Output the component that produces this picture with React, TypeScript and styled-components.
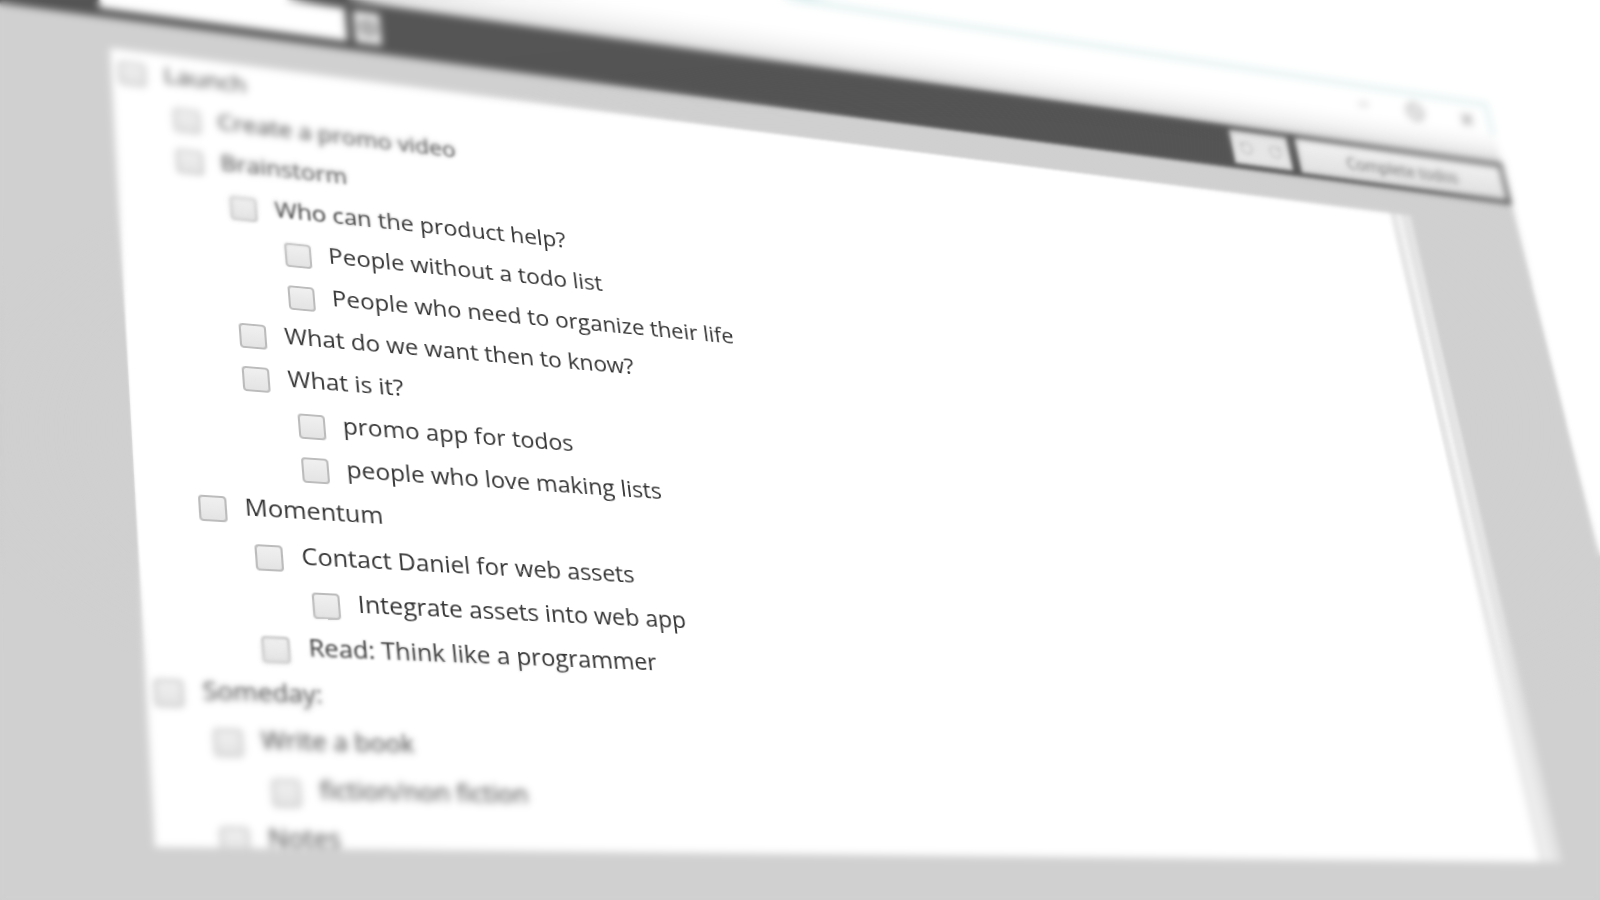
import React from 'react';
import styled, { createGlobalStyle } from 'styled-components';
import { CircleMinus, CirclePlus, Minus, RotateCcw, RotateCw, X } from 'lucide-react';

// the window is laid out flat, then projected so the document sheet lands on this quad
const SHEET_W = 1500;
const SHEET_H = 800;
const LEFT_BLEED = 400;
const TOP_BLEED = 182;

const projection = () => {
    const [x0, y0, x1, y1, x2, y2, x3, y3] = [110, 48, 1390, 213, 1540, 862, 155, 847];
    const dx1 = x1 - x2;
    const dx2 = x3 - x2;
    const sx = x0 - x1 + x2 - x3;
    const dy1 = y1 - y2;
    const dy2 = y3 - y2;
    const sy = y0 - y1 + y2 - y3;
    const den = dx1 * dy2 - dx2 * dy1;
    const g = (sx * dy2 - dx2 * sy) / den;
    const h = (dx1 * sy - sx * dy1) / den;
    const a = x1 - x0 + g * x1;
    const b = x3 - x0 + h * x3;
    const d = y1 - y0 + g * y1;
    const e = y3 - y0 + h * y3;
    const ox = LEFT_BLEED / SHEET_W;
    const oy = TOP_BLEED / SHEET_H;
    const w = 1 - g * ox - h * oy;
    const m = [
        a / SHEET_W, d / SHEET_W, 0, g / SHEET_W,
        b / SHEET_H, e / SHEET_H, 0, h / SHEET_H,
        0, 0, w, 0,
        x0 - a * ox - b * oy, y0 - d * ox - e * oy, 0, w,
    ];
    return `matrix3d(${m.map((n) => (n / w).toFixed(8)).join(',')})`;
};

const GlobalStyle = createGlobalStyle`
    html, body {
        margin: 0;
        background: #ffffff;
    }
`;

const Stage = styled.div`
    position: relative;
    width: 1600px;
    height: 900px;
    overflow: hidden;
    background: #ffffff;
    font-family: 'Open Sans', 'Liberation Sans', sans-serif;
`;

const AppWindow = styled.div`
    display: flex;
    flex-direction: column;
    width: 2090px;
    height: 1200px;
    transform-origin: 0 0;
    transform: ${projection()};
`;

const TitleBar = styled.div`
    position: relative;
    display: flex;
    justify-content: flex-end;
    align-items: center;
    gap: 53px;
    box-sizing: border-box;
    height: 85px;
    margin-top: 5px;
    padding: 0 26px 34px 0;
    border-top: 6px solid #deeeee;
    background: linear-gradient(#ffffff 45%, #f6f6f6 70%, #dedede 100%);

    &::after {
        content: '';
        position: absolute;
        top: 0;
        right: 0;
        width: 6px;
        height: 40px;
        background: #deeeee;
    }
`;

const WindowControl = styled.span`
    display: flex;
    color: #a0a0a0;
`;

const Toolbar = styled.div`
    display: flex;
    align-items: center;
    box-sizing: border-box;
    height: 58px;
    padding: 0 6px 0 392px;
    background: #555555;
`;

const SearchInput = styled.div`
    width: 245px;
    height: 38px;
    background: #ffffff;
`;

const AddButton = styled.button`
    display: flex;
    align-items: center;
    justify-content: center;
    width: 27px;
    height: 37px;
    margin-left: 9px;
    padding: 0;
    border: 0;
    background: #e6e6e6;
    color: #555555;
`;

const ToolGroup = styled.div`
    display: flex;
    margin-left: auto;
    background: #e6e6e6;
`;

const ToolButton = styled.button`
    display: flex;
    align-items: center;
    justify-content: center;
    width: 40px;
    height: 44px;
    padding: 0;
    border: 0;
    background: transparent;
    color: #b4b4b4;
`;

const CompleteButton = styled.button`
    width: 300px;
    height: 46px;
    margin-left: 12px;
    padding: 0;
    border: 0;
    background: linear-gradient(#f2f2f2, #e0e0e0);
    color: #5e5e5e;
    font-family: inherit;
    font-size: 22px;
`;

const Page = styled.div`
    display: flex;
    flex: 1;
    align-items: flex-start;
    padding: 34px 0 0 ${LEFT_BLEED}px;
    background: #d0d0d0;
`;

const Sheet = styled.div`
    box-sizing: border-box;
    width: ${SHEET_W}px;
    height: ${SHEET_H}px;
    padding-top: 3px;
    overflow: hidden;
    background: #ffffff;
`;

const ScrollTrack = styled.div`
    box-sizing: border-box;
    width: 30px;
    height: ${SHEET_H}px;
    border-left: 9px solid #e6e6e6;
    border-right: 14px solid #e4e4e4;
    background: #f2f2f2;
`;

const Row = styled.div<{ $level: number }>`
    display: flex;
    align-items: center;
    gap: 17px;
    height: 45.2px;
    padding-left: ${(p) => 7 + p.$level * 49.6}px;
    color: #363636;
    font-size: 23.8px;
    white-space: nowrap;
`;

const Label = styled.span`
    padding-bottom: 8px;
    line-height: 32px;
`;

const CheckBox = styled.span`
    flex: none;
    box-sizing: border-box;
    width: 26px;
    height: 26px;
    border: 2px solid #bcbcbc;
    border-radius: 4px;
    background: linear-gradient(#f0f0f0, #e4e4e4);
`;

// backdrop blur rings, stacked so the picture softens away from the focus point
const Lens = styled.div<{ $blur: number; $shape: string; $from: number; $to: number }>`
    position: absolute;
    inset: 0;
    backdrop-filter: blur(${(p) => p.$blur}px);
    mask-image: radial-gradient(
        ${(p) => p.$shape},
        transparent ${(p) => p.$from}%,
        black ${(p) => p.$to}%
    );
`;

const ITEMS: [number, string][] = [
    [0, 'Launch'],
    [1, 'Create a promo video'],
    [1, 'Brainstorm'],
    [2, 'Who can the product help?'],
    [3, 'People without a todo list'],
    [3, 'People who need to organize their life'],
    [2, 'What do we want then to know?'],
    [2, 'What is it?'],
    [3, 'promo app for todos'],
    [3, 'people who love making lists'],
    [1, 'Momentum'],
    [2, 'Contact Daniel for web assets'],
    [3, 'Integrate assets into web app'],
    [2, 'Read: Think like a programmer'],
    [0, 'Someday:'],
    [1, 'Write a book'],
    [2, 'fiction/non fiction'],
    [1, 'Notes'],
];

const FOCUS = 'ellipse 560px 235px at 760px 430px';
const WIDE_FOCUS = 'ellipse 760px 290px at 900px 430px';

const LENSES = [
    { blur: 0.7, shape: FOCUS, from: 90, to: 105 },
    { blur: 1.2, shape: FOCUS, from: 105, to: 120 },
    { blur: 1.8, shape: FOCUS, from: 120, to: 135 },
    { blur: 2.4, shape: FOCUS, from: 135, to: 165 },
    { blur: 2.5, shape: WIDE_FOCUS, from: 108, to: 128 },
];

export default function App() {
    return (
        <Stage>
            <GlobalStyle />
            <AppWindow>
                <TitleBar>
                    <WindowControl>
                        <Minus size={20} strokeWidth={3} />
                    </WindowControl>
                    <WindowControl>
                        <CircleMinus size={26} strokeWidth={3} />
                    </WindowControl>
                    <WindowControl>
                        <X size={24} strokeWidth={4} />
                    </WindowControl>
                </TitleBar>
                <Toolbar>
                    <SearchInput />
                    <AddButton>
                        <CirclePlus size={20} strokeWidth={2.5} />
                    </AddButton>
                    <ToolGroup>
                        <ToolButton>
                            <RotateCcw size={20} />
                        </ToolButton>
                        <ToolButton>
                            <RotateCw size={20} />
                        </ToolButton>
                    </ToolGroup>
                    <CompleteButton>Complete todos</CompleteButton>
                </Toolbar>
                <Page>
                    <Sheet>
                        {ITEMS.map(([level, text]) => (
                            <Row key={text} $level={level}>
                                <CheckBox />
                                <Label>{text}</Label>
                            </Row>
                        ))}
                    </Sheet>
                    <ScrollTrack />
                </Page>
            </AppWindow>
            {LENSES.map((lens) => (
                <Lens
                    key={`${lens.shape}-${lens.from}`}
                    $blur={lens.blur}
                    $shape={lens.shape}
                    $from={lens.from}
                    $to={lens.to}
                />
            ))}
        </Stage>
    );
}
